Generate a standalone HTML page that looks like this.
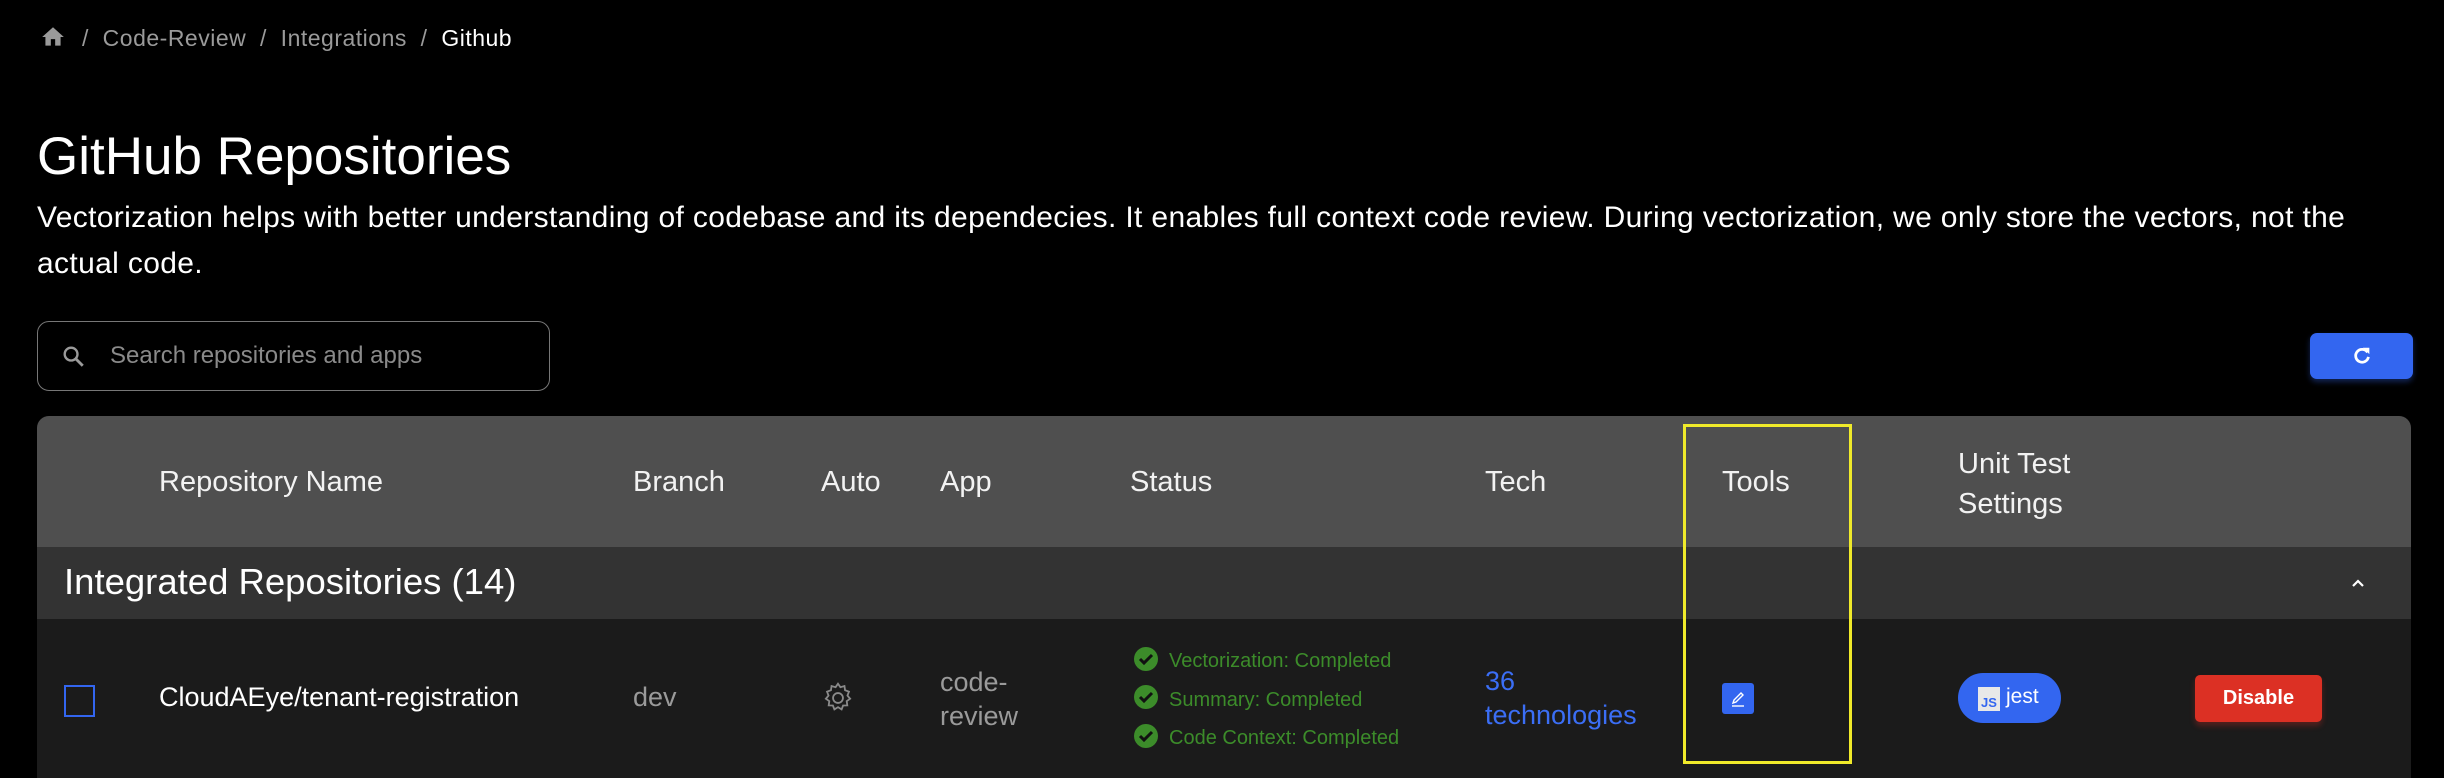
<!DOCTYPE html>
<html><head><meta charset="utf-8"><style>
*{margin:0;padding:0;box-sizing:border-box}
body{width:2444px;height:778px;background:#000;overflow:hidden;font-family:"Liberation Sans",sans-serif;color:#fff;position:relative}
.a{position:absolute;white-space:nowrap}
.hd{font-size:29px;color:#f2f2f2}
</style></head><body>
<svg class="a" style="left:39px;top:24px" width="28" height="26" viewBox="0 0 24 24"><path d="M10 20v-6h4v6h5v-8h3L12 3 2 12h3v8z" fill="#9a9a9a"/></svg>
<div class="a" style="left:82px;top:25px;font-size:23px;color:#9a9a9a;letter-spacing:0.5px">/&nbsp;&nbsp;Code-Review&nbsp;&nbsp;/&nbsp;&nbsp;Integrations&nbsp;&nbsp;/&nbsp;&nbsp;<span style="color:#fff">Github</span></div>
<div class="a" style="left:37px;top:126px;font-size:53px">GitHub Repositories</div>
<div class="a" style="left:37px;top:195px;font-size:30px;letter-spacing:0.35px;line-height:46px;white-space:normal;width:2345px">Vectorization helps with better understanding of codebase and its dependecies. It enables full context code review. During vectorization, we only store the vectors, not the actual code.</div>
<div class="a" style="left:37px;top:321px;width:513px;height:70px;border:1.5px solid #777;border-radius:12px"></div>
<svg class="a" style="left:60px;top:343px" width="28" height="28" viewBox="0 0 24 24"><circle cx="9.5" cy="9.5" r="5.5" fill="none" stroke="#9a9a9a" stroke-width="2"/><path d="M13.5 13.5l6 6" stroke="#9a9a9a" stroke-width="2.4"/></svg>
<div class="a" style="left:110px;top:342px;font-size:24px;color:#8a8a8a">Search repositories and apps</div>
<div class="a" style="left:2310px;top:333px;width:103px;height:46px;background:#3366f0;border-radius:7px;box-shadow:0 3px 6px rgba(51,102,240,.35)"></div>
<svg class="a" style="left:2351px;top:345px" width="22" height="22" viewBox="0 0 24 24"><path d="M18 8A7 7 0 1 0 19 13" fill="none" stroke="#fff" stroke-width="3"/><path d="M13 3h7v7z" fill="#fff"/></svg>
<div class="a" style="left:37px;top:416px;width:2374px;height:362px;background:#1b1b1b;border-radius:12px 12px 0 0;overflow:hidden">
 <div style="height:131px;background:#4f4f4f"></div>
 <div style="height:72px;background:#333"></div>
</div>
<div class="a hd" style="left:159px;top:466px">Repository Name</div>
<div class="a hd" style="left:633px;top:466px">Branch</div>
<div class="a hd" style="left:821px;top:466px">Auto</div>
<div class="a hd" style="left:940px;top:466px">App</div>
<div class="a hd" style="left:1130px;top:466px">Status</div>
<div class="a hd" style="left:1485px;top:466px">Tech</div>
<div class="a hd" style="left:1722px;top:466px">Tools</div>
<div class="a hd" style="left:1958px;top:444px;line-height:40px">Unit Test<br>Settings</div>
<div class="a" style="left:64px;top:561px;font-size:36.5px">Integrated Repositories (14)</div>
<svg class="a" style="left:2348px;top:574px" width="20" height="18" viewBox="0 0 20 18"><path d="M5 12l5-5 5 5" fill="none" stroke="#fff" stroke-width="2.2"/></svg>
<div class="a" style="left:64px;top:685px;width:31px;height:32px;border:2px solid #3366f0"></div>
<div class="a" style="left:159px;top:682px;font-size:27px">CloudAEye/tenant-registration</div>
<div class="a" style="left:633px;top:682px;font-size:27px;color:#9a9a9a">dev</div>
<svg class="a" style="left:820px;top:680px" width="36" height="36" viewBox="0 0 24 24"><path d="M12 2.5l1.6 2.3 2.7-.8.4 2.8 2.6 1-1 2.6 1.8 2.1-2.3 1.6.4 2.8-2.8.1-1 2.6-2.4-1.5-2.4 1.5-1-2.6-2.8-.1.4-2.8-2.3-1.6 1.8-2.1-1-2.6 2.6-1 .4-2.8 2.7.8z" fill="none" stroke="#8a8a8a" stroke-width="1.2"/><circle cx="12" cy="12" r="3.3" fill="none" stroke="#8a8a8a" stroke-width="1.2"/></svg>
<div class="a" style="left:940px;top:665px;font-size:27px;color:#9a9a9a;line-height:34px">code-<br>review</div>
<div class="a" style="left:1169px;top:642px;font-size:20px;color:#3c8c2a;line-height:38.5px">
<div>Vectorization: Completed</div><div>Summary: Completed</div><div>Code Context: Completed</div></div>
<svg class="a" style="left:1133px;top:646px" width="26" height="104" viewBox="0 0 26 104">
<g fill="#3c8c2a"><circle cx="13" cy="13" r="12"/><circle cx="13" cy="51" r="12"/><circle cx="13" cy="90" r="12"/></g>
<g fill="none" stroke="#111" stroke-width="3"><path d="M7 13l4 4 8-8"/><path d="M7 51l4 4 8-8"/><path d="M7 90l4 4 8-8"/></g></svg>
<div class="a" style="left:1485px;top:664px;font-size:27px;color:#3b6ef5;line-height:34px">36<br>technologies</div>
<div class="a" style="left:1722px;top:683px;width:32px;height:31px;background:#3366f0;border-radius:3px"></div>
<svg class="a" style="left:1728px;top:689px" width="20" height="20" viewBox="0 0 20 20"><path d="M5 14l1-3 7-7 2 2-7 7z" fill="none" stroke="#fff" stroke-width="1.4"/><path d="M4 17h12" stroke="#fff" stroke-width="1.4"/></svg>
<div class="a" style="left:1683px;top:424px;width:169px;height:340px;border:3px solid #f0ea2a"></div>
<div class="a" style="left:1958px;top:673px;width:103px;height:50px;background:#3366f0;border-radius:25px"></div>
<div class="a" style="left:1978px;top:687px;width:22px;height:24px;background:#e8e8e8;color:#3366f0;font-size:13px;font-weight:bold;text-align:center;padding-top:9px;line-height:14px">JS</div>
<div class="a" style="left:2006px;top:685px;font-size:21px;line-height:24px">jest</div>
<div class="a" style="left:2195px;top:675px;width:127px;height:47px;background:#dc3024;border-radius:5px;box-shadow:0 4px 6px rgba(220,48,36,.3);font-size:20px;font-weight:bold;text-align:center;line-height:47px">Disable</div>
</body></html>
